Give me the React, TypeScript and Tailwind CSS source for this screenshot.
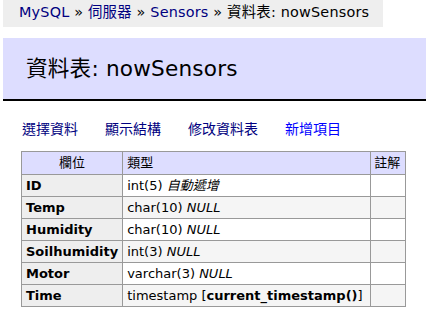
import React from "react";

const font = { fontFamily: '"DejaVu Sans", "Noto Sans CJK TC", sans-serif' };

type Row = { name: string; type: React.ReactNode; odd: boolean };

const rows: Row[] = [
  { name: "ID", type: <>int(5) <i>自動遞增</i></>, odd: false },
  { name: "Temp", type: <>char(10) <i>NULL</i></>, odd: true },
  { name: "Humidity", type: <>char(10) <i>NULL</i></>, odd: false },
  { name: "Soilhumidity", type: <>int(3) <i>NULL</i></>, odd: true },
  { name: "Motor", type: <>varchar(3) <i>NULL</i></>, odd: false },
  { name: "Time", type: <>timestamp [<b>current_timestamp()</b>]</>, odd: true },
];

export default function App() {
  return (
    <div className="w-[433px] h-[317px] bg-white text-black overflow-hidden" style={font}>
      <div className="ml-[3px] w-[380px] h-[27px] bg-[#eeeeee] pl-[16px] text-[14.4px] leading-[25px] tracking-[0.2px] whitespace-nowrap">
        <span className="text-[#000080]">MySQL</span> » <span className="text-[#000080]">伺服器</span> »{" "}
        <span className="text-[#000080]">Sensors</span> » 資料表: nowSensors
      </div>
      <div className="mt-[11px] ml-[3px] w-[423px] bg-[#ddddff] border-b-2 border-black pt-[17px] pb-[17px] pl-[23px] text-[21.6px] leading-[27px] tracking-[0.2px]">
        資料表: nowSensors
      </div>
      <div className="mt-[19px] pl-[22px] flex gap-[27px] text-[14px] leading-[18px] whitespace-nowrap">
        <span className="text-[#000080]">選擇資料</span>
        <span className="text-[#000080]">顯示結構</span>
        <span className="text-[#000080]">修改資料表</span>
        <span className="text-[#0000ff]">新增項目</span>
      </div>
      <table className="mt-[13px] ml-[21px] border-collapse text-[13px] leading-[16px]">
        <thead>
          <tr className="bg-[#ddddff]">
            <th className="w-[101px] h-[23px] border border-[#999999] px-[4px] py-0 font-normal text-center">欄位</th>
            <td className="w-[248px] h-[23px] border border-[#999999] px-[4px] py-0">類型</td>
            <td className="w-[35px] h-[23px] border border-[#999999] px-[3px] py-0">註解</td>
          </tr>
        </thead>
        <tbody>
          {rows.map((r) => (
            <tr key={r.name}>
              <th className="h-[22px] border border-[#999999] bg-[#eeeeee] px-[4px] py-0 text-left font-bold whitespace-nowrap">
                {r.name}
              </th>
              <td className={`h-[22px] border border-[#999999] px-[4px] py-0 whitespace-nowrap ${r.odd ? "bg-[#f5f5f5]" : "bg-white"}`}>
                {r.type}
              </td>
              <td className={`h-[22px] border border-[#999999] px-[3px] py-0 ${r.odd ? "bg-[#f5f5f5]" : "bg-white"}`}></td>
            </tr>
          ))}
        </tbody>
      </table>
    </div>
  );
}
